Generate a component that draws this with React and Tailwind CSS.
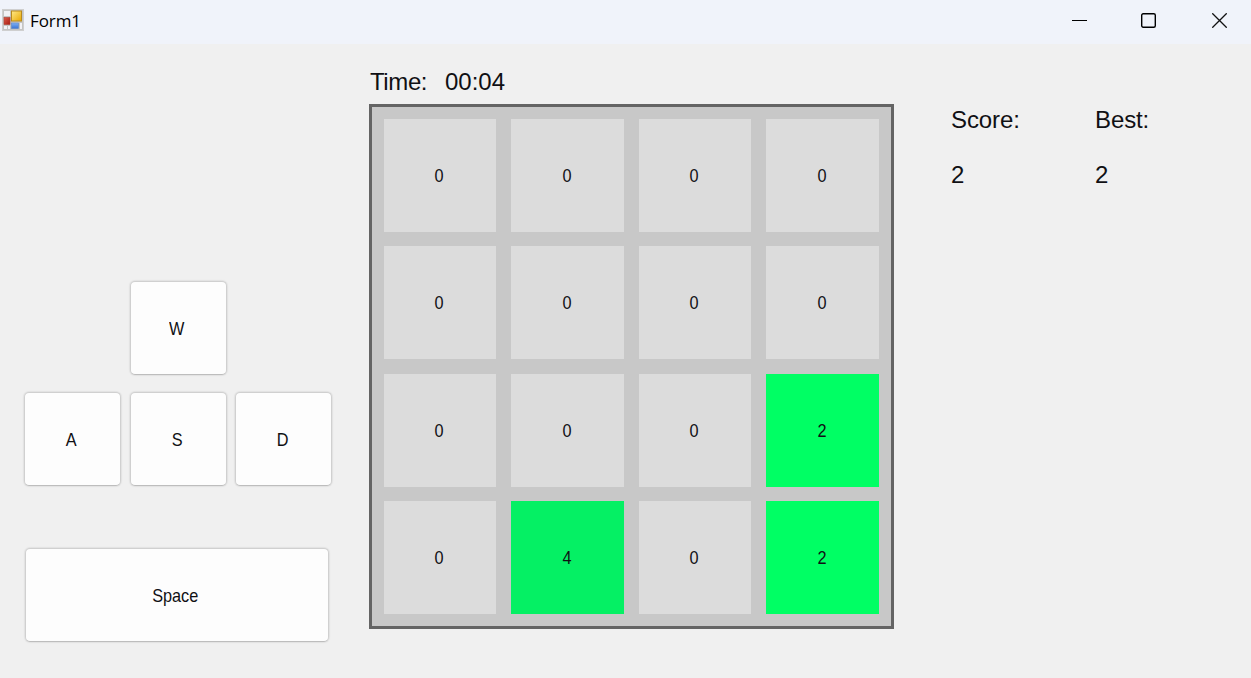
const board = [
  [0, 0, 0, 0],
  [0, 0, 0, 0],
  [0, 0, 0, 2],
  [0, 4, 0, 2],
];

const tileColors = {
  0: "bg-[#dcdcdc]",
  2: "bg-[#00ff64]",
  4: "bg-[#05f064]",
};

function FormIcon() {
  return (
    <svg width="22" height="22" viewBox="0 0 22 22" className="block">
      <defs>
        <linearGradient id="gold" x1="0" y1="0" x2="1" y2="1">
          <stop offset="0" stopColor="#ffe98a" />
          <stop offset="1" stopColor="#e9a800" />
        </linearGradient>
        <linearGradient id="red" x1="0" y1="0" x2="1" y2="1">
          <stop offset="0" stopColor="#dc5a48" />
          <stop offset="1" stopColor="#a81c14" />
        </linearGradient>
        <linearGradient id="blue" x1="0" y1="0" x2="0" y2="1">
          <stop offset="0" stopColor="#7fb0f4" />
          <stop offset="1" stopColor="#3a74d4" />
        </linearGradient>
      </defs>
      <rect x="0.5" y="0.5" width="21" height="21" fill="#c4c4c4" stroke="#cfcfcf" />
      <rect x="2" y="2" width="6" height="5" fill="#f1f1f5" />
      <rect x="2" y="17" width="3" height="3" fill="#f1f1f5" />
      <rect x="6" y="17" width="2" height="3" fill="#f1f1f5" />
      <rect x="18" y="14" width="2" height="6" fill="#f1f1f5" />
      <rect x="2" y="8.5" width="6" height="7" fill="url(#red)" stroke="#b03c30" strokeWidth="0.6" />
      <rect x="9.5" y="2" width="10" height="10" fill="url(#gold)" stroke="#b98a1c" strokeWidth="1" />
      <rect x="9.5" y="14" width="7" height="5.5" fill="url(#blue)" stroke="#5b86c8" strokeWidth="0.6" />
    </svg>
  );
}

function TitleBar() {
  return (
    <header className="flex h-11 items-start justify-between bg-[#f0f3fa]">
      <div className="flex pl-[2px] pt-[9px]">
        <FormIcon />
        <span className="ml-[6px] font-['Open_Sans',sans-serif] text-[17px] leading-6 tracking-[-0.1px] text-black">
          Form1
        </span>
      </div>
      <div className="flex pr-6 pt-[13px]">
        <svg width="15" height="15" viewBox="0 0 15 15" fill="none" stroke="#000">
          <path d="M0 7.5H15" />
        </svg>
        <svg width="15" height="15" viewBox="0 0 15 15" fill="none" stroke="#000" strokeWidth="1.4" className="ml-[54px] mr-14">
          <rect x="0.7" y="0.7" width="13.6" height="13.6" rx="1.5" />
        </svg>
        <svg width="15" height="15" viewBox="0 0 15 15" fill="none" stroke="#111" strokeWidth="1.3">
          <path d="M0.3 0.3L14.7 14.7M14.7 0.3L0.3 14.7" />
        </svg>
      </div>
    </header>
  );
}

function Key({ label, wide }) {
  return (
    <button
      className={`flex h-[94px] items-center justify-center rounded-[5px] border border-[#d0d0d0] border-b-[#bdbdbd] bg-[#fdfdfd] pr-[3px] pt-[2px] text-[18.5px] leading-6 shadow-[0_0_1px_1px_#e2e2e2] ${
        wide ? "w-[304px]" : "w-[97px]"
      }`}
    >
      <span className="inline-block scale-x-[0.88]">{label}</span>
    </button>
  );
}

function Keypad() {
  return (
    <div className="w-[369px] pl-6 pt-[237px]">
      <div className="ml-[106px]">
        <Key label="W" />
      </div>
      <div className="mt-[17px] flex gap-[8.7px]">
        <Key label="A" />
        <Key label="S" />
        <Key label="D" />
      </div>
      <div className="ml-px mt-[62px]">
        <Key label="Space" wide />
      </div>
    </div>
  );
}

function Board() {
  return (
    <div className="grid h-[525px] w-[525px] grid-cols-[repeat(4,112.7px)] grid-rows-[repeat(4,112.7px)] gap-[14.8px] border-[3px] border-[#646464] bg-[#c8c8c8] pl-[11.6px] pt-3">
      {board.flat().map((value, i) => (
        <div
          key={i}
          className={`flex items-center justify-center pr-px pt-px text-[18.5px] leading-6 ${tileColors[value]}`}
        >
          <span className="inline-block scale-x-[0.88]">{value}</span>
        </div>
      ))}
    </div>
  );
}

function Stat({ label, value }) {
  return (
    <div className="w-36">
      <div className="tracking-[-0.1px]">{label}</div>
      <div className="mt-[27px]">{value}</div>
    </div>
  );
}

export default function App() {
  return (
    <div className="h-[678px] w-[1251px] overflow-hidden bg-[#f0f0f0] font-['Liberation_Sans',Arial,sans-serif] text-[#101014]">
      <TitleBar />
      <main className="flex">
        <Keypad />
        <section className="w-[525px]">
          <div className="flex h-[60px] pl-px pt-6 text-2xl leading-7">
            <span className="w-[75px] tracking-[-0.4px]">Time:</span>
            <span>00:04</span>
          </div>
          <Board />
        </section>
        <section className="flex pl-[57px] pt-[62px] text-2xl leading-7">
          <Stat label="Score:" value="2" />
          <Stat label="Best:" value="2" />
        </section>
      </main>
    </div>
  );
}
